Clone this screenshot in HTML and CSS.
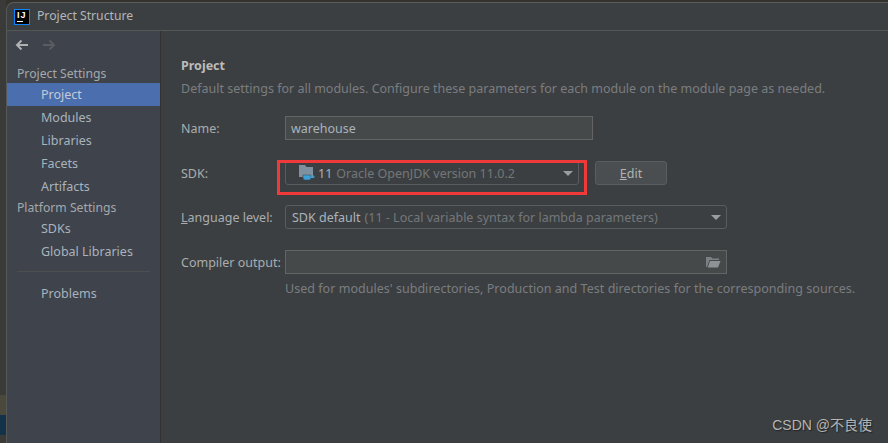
FILE: index.html
```html
<!DOCTYPE html>
<html>
<head>
  <title>Project Structure</title>
  <link rel="stylesheet" href="styles.css">
</head>
<body>
  <div class="strip">
    <div class="strip-dark"></div>
    <div class="strip-tan"></div>
    <div class="strip-blue"></div>
    <div class="strip-end"></div>
  </div>

  <div class="window">
    <header class="titlebar">
      <span class="logo"><span class="logo-text">IJ</span><span class="logo-bar"></span></span>
      <span class="title">Project Structure</span>
    </header>

    <div class="content">
      <aside class="sidebar">
        <div class="arrows">
          <svg width="16" height="16" viewBox="0 0 16 16"><path d="M14 8H3M7.5 3.5 3 8l4.500 4.500" fill="none" stroke="#afb1b3" stroke-width="2"/></svg>
          <svg width="16" height="16" viewBox="0 0 16 16"><path d="M2 8h11M8.500 3.500 13 8l-4.500 4.500" fill="none" stroke="#5a5d5f" stroke-width="2"/></svg>
        </div>
        <div class="group">Project Settings</div>
        <a class="item selected">Project</a>
        <a class="item">Modules</a>
        <a class="item">Libraries</a>
        <a class="item">Facets</a>
        <a class="item">Artifacts</a>
        <div class="group">Platform Settings</div>
        <a class="item">SDKs</a>
        <a class="item">Global Libraries</a>
        <div class="separator"></div>
        <a class="item">Problems</a>
      </aside>

      <main class="panel">
        <h2>Project</h2>
        <p class="hint">Default settings for all modules. Configure these parameters for each module on the module page as needed.</p>

        <div class="row row-name">
          <label>Name:</label>
          <div class="field name-field">warehouse</div>
        </div>

        <div class="row row-sdk">
          <label>SDK:</label>
          <div class="combo sdk-combo">
            <svg class="sdk-icon" width="16" height="16" viewBox="0 0 16 16">
              <path d="M0 0h6l1.500 2H14v10H0z" fill="#7f919e"/>
              <path d="M4 10h8v3a2 2 0 0 1-2 2H6a2 2 0 0 1-2-2z" fill="#3ba1d8" stroke="#3c3f41" stroke-width="0.5"/>
              <path d="M12 11h3v1.500h-3" fill="none" stroke="#3ba1d8"/>
            </svg>
            <span class="value">11</span>
            <span class="muted">Oracle OpenJDK version 11.0.2</span>
            <span class="caret"></span>
          </div>
          <button class="edit"><u>E</u>dit</button>
        </div>

        <div class="row row-lang">
          <label><u>L</u>anguage level:</label>
          <div class="combo lang-combo">
            <span class="value">SDK default</span>
            <span class="muted">(11 - Local variable syntax for lambda parameters)</span>
            <span class="caret"></span>
          </div>
        </div>

        <div class="row row-output">
          <label>Compiler output:</label>
          <div class="field output-field">
            <svg width="16" height="16" viewBox="0 0 16 16">
              <path d="M1 3h5l1.500 1.500H14V6H4.500L2 13H1z" fill="#7d8082"/>
              <path d="M5 7h10.500L13 13.500H2.800z" fill="#8f9294"/>
            </svg>
          </div>
        </div>

        <p class="hint help">Used for modules' subdirectories, Production and Test directories for the corresponding sources.</p>
      </main>
    </div>
  </div>

  <div class="highlight"></div>
  <div class="watermark">CSDN @不良使</div>
</body>
</html>
```

FILE: styles.css
```css
* {
  box-sizing: border-box;
}
html, body {
  height: 100%;
}
body {
  margin: 0;
  display: flex;
  overflow: hidden;
  background: #33322d;
  font-family: "Noto Sans", "Noto Sans CJK SC", sans-serif;
  font-size: 12.5px;
  color: #bbbbbb;
}

/* bit of desktop showing on the left */
.strip {
  width: 6px;
  flex: none;
  display: flex;
  flex-direction: column;
}
.strip-dark {
  height: 395px;
  background: #3a3b39;
}
.strip-tan {
  height: 20px;
  background: #4b483c;
}
.strip-blue {
  height: 20px;
  background: #12324a;
}
.strip-end {
  flex: 1;
  background: #3a3b39;
}

.window {
  flex: 1;
  margin-top: 2px;
  display: flex;
  flex-direction: column;
  background: #3c3f41;
  border-top: 1px solid #5c5d5d;
  border-left: 1px solid #565757;
  border-top-left-radius: 8px;
}
.titlebar {
  height: 28px;
  flex: none;
  display: flex;
  align-items: center;
  padding-left: 7px;
  border-bottom: 1px solid #555757;
}
.logo {
  width: 16px;
  height: 16px;
  margin-right: 7px;
  display: flex;
  flex-direction: column;
  background: #000;
  border: 1px solid #0a84ff;
  padding: 1px 0 0 2px;
}
.logo-text {
  height: 8px;
  font: bold 9px/8px "Liberation Sans", sans-serif;
  color: #fff;
  letter-spacing: 1px;
}
.logo-bar {
  width: 6px;
  height: 1px;
  margin-top: 2px;
  background: #fff;
}
.title {
  font-size: 12.2px;
  line-height: 16px;
  padding-bottom: 2px;
  color: #b4b6b7;
}

.content {
  flex: 1;
  display: flex;
}
.sidebar {
  width: 154px;
  flex: none;
  display: flex;
  flex-direction: column;
  background: #3e434c;
  border-right: 1px solid #323232;
}
.arrows {
  height: 32px;
  display: flex;
  align-items: center;
  gap: 11px;
  padding: 0 0 4px 7px;
}
.group {
  height: 20px;
  padding-left: 10px;
  font-size: 12.2px;
  line-height: 22px;
  color: #a6a8aa;
}
.item {
  height: 23px;
  padding-left: 34px;
  line-height: 24px;
  color: #a9b3bd;
}
.item.selected {
  background: #4b6eaf;
  color: #c4cbd6;
}
.item + .group {
  height: 19px;
  line-height: 20px;
}
.separator {
  height: 1px;
  margin: 8px 10px 10px 10px;
  background: #4c4e50;
}

.panel {
  flex: 1;
  padding: 25px 0 0 20px;
}
h2 {
  margin: 0;
  font-size: 12.5px;
  line-height: 20px;
  font-weight: bold;
  color: #bbbbbb;
}
.hint {
  margin: 3px 0 0;
  line-height: 20px;
  color: #7a7d80;
  white-space: nowrap;
}
.row {
  display: flex;
  align-items: center;
}
.row label {
  width: 104px;
  flex: none;
  color: #a9adb0;
}
.row-name {
  margin-top: 17px;
}
.row-sdk {
  margin-top: 21px;
}
.row-lang {
  margin-top: 20px;
}
.row-output {
  margin-top: 21px;
}
.field {
  height: 24px;
  display: flex;
  align-items: center;
  padding-left: 5px;
  background: #45494a;
  border: 1px solid #646464;
  color: #a9b3bb;
}
.name-field {
  width: 308px;
}
.output-field {
  width: 442px;
  justify-content: flex-end;
  padding-right: 5px;
}
.combo {
  height: 24px;
  display: flex;
  align-items: center;
  position: relative;
  background: #3c3f41;
  border: 1px solid #5a5c5e;
  border-radius: 3px;
  padding-left: 6px;
  white-space: nowrap;
}
.sdk-combo {
  width: 294px;
  padding-left: 13px;
}
.sdk-icon {
  margin-right: 3px;
}
.lang-combo {
  width: 442px;
}
.value {
  color: #a9b3bb;
  margin-right: 4px;
}
.muted {
  color: #73777a;
}
.caret {
  position: absolute;
  right: 5px;
  top: 9px;
  width: 0;
  height: 0;
  border-left: 5px solid transparent;
  border-right: 5px solid transparent;
  border-top: 5px solid #9a9da0;
}
.edit {
  width: 72px;
  height: 24px;
  margin-left: 16px;
  padding: 0;
  background: #4a4e50;
  border: 1px solid #5b5e60;
  border-radius: 3px;
  font: inherit;
  color: #b0b3b5;
}
.help {
  margin: 5px 0 0 104px;
  letter-spacing: 0.03px;
}

/* red annotation box drawn on top of the screenshot */
.highlight {
  position: absolute;
  left: 277px;
  top: 160px;
  width: 310px;
  height: 35px;
  border: 3px solid #f03a3a;
}
.watermark {
  position: absolute;
  right: 16px;
  top: 416px;
  font-family: "Liberation Sans", "Noto Sans CJK SC", sans-serif;
  font-size: 14px;
  line-height: 18px;
  color: #b5b5b5;
  text-shadow: 1px 1px 1px #222;
}
```
